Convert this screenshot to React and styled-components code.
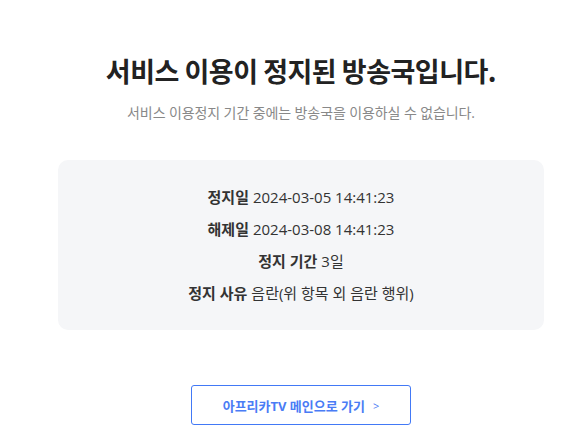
import React from 'react';
import styled, { createGlobalStyle } from 'styled-components';

const Global = createGlobalStyle`
  body {
    margin: 0;
    background: #fff;
    font-family: "Open Sans", "Noto Sans CJK KR", sans-serif;
  }
`;

const Page = styled.div`
  width: 486px;
  margin-left: 58px;
  padding-top: 52px;
  display: flex;
  flex-direction: column;
  align-items: center;
`;

const Title = styled.h1`
  margin: 0;
  font-size: 27px;
  font-weight: 700;
  color: #222;
  letter-spacing: -0.5px;
  line-height: 38px;
  font-family: "Noto Sans CJK KR", sans-serif;
`;

const Sub = styled.p`
  margin: 14px 0 0;
  font-size: 14px;
  color: #888;
  letter-spacing: -0.1px;
  line-height: 18px;
`;

const InfoBox = styled.div`
  align-self: stretch;
  margin-top: 38px;
  background: #f5f6f8;
  border-radius: 10px;
  padding: 27px 0;
  display: flex;
  flex-direction: column;
  align-items: center;
  gap: 12px;
`;

const Row = styled.div`
  font-size: 15px;
  line-height: 20px;
  color: #333;
`;

const Label = styled.strong`
  font-weight: 700;
  color: #333;
  margin-right: 4px;
`;

const MainButton = styled.a`
  margin-top: 55px;
  width: 220px;
  height: 40px;
  box-sizing: border-box;
  border: 1px solid #4279f6;
  border-radius: 3px;
  display: flex;
  align-items: center;
  justify-content: center;
  gap: 8px;
  color: #4a7cf5;
  font-size: 13px;
  font-weight: 700;
  text-decoration: none;
`;

const Arrow = styled.span`
  font-size: 11px;
  font-weight: 400;
`;

const rows = [
  ['정지일', '2024-03-05 14:41:23'],
  ['해제일', '2024-03-08 14:41:23'],
  ['정지 기간', '3일'],
  ['정지 사유', '음란(위 항목 외 음란 행위)'],
];

export default function App() {
  return (
    <>
      <Global />
      <Page>
        <Title>서비스 이용이 정지된 방송국입니다.</Title>
        <Sub>서비스 이용정지 기간 중에는 방송국을 이용하실 수 없습니다.</Sub>
        <InfoBox>
          {rows.map(([k, v]) => (
            <Row key={k}>
              <Label>{k}</Label>
              {v}
            </Row>
          ))}
        </InfoBox>
        <MainButton href="#">
          아프리카TV 메인으로 가기
          <Arrow>&gt;</Arrow>
        </MainButton>
      </Page>
    </>
  );
}
